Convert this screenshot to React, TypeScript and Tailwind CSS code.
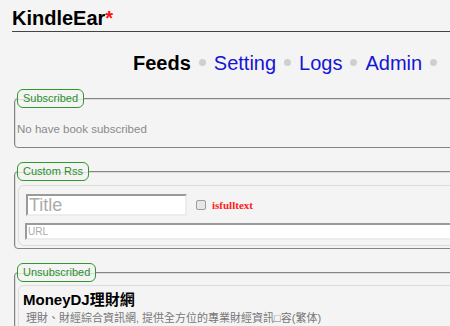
export default function App() {
  const links = ['Setting', 'Logs', 'Admin'];

  return (
    <div className="h-[326px] w-full overflow-hidden bg-[#f4f4f4] font-['Liberation_Sans',Arial,sans-serif]">
      <div className="w-[760px] pl-[12px]">
        {/* HEADER */}
        <header className="border-b border-[#444] pt-[6px] pb-[1px]">
          <h1 className="text-[20px] leading-[24px] font-bold text-black">
            KindleEar<span className="text-[#ff1010]">*</span>
          </h1>
        </header>

        {/* NAV */}
        <nav className="mt-[19px] flex items-center gap-[8px] pl-[121px] text-[20px] leading-[24px]">
          <span className="font-bold text-black">Feeds</span>
          {links.map((name) => (
            <span key={name} className="flex items-center gap-[8px]">
              <span className="mb-[2px] h-[7px] w-[7px] rounded-full bg-[#cfcfcf]" />
              <a href="#" className="text-[#1515d5]">
                {name}
              </a>
            </span>
          ))}
          <span className="mb-[2px] h-[7px] w-[7px] rounded-full bg-[#cfcfcf]" />
        </nav>

        {/* SUBSCRIBED */}
        <fieldset className="mt-[14px] ml-[2px] rounded-[4px] border border-[#858585] px-[2px] pt-[14px] pb-[11px] shadow-[inset_1px_1px_0_#dcdcdc]">
          <legend className="h-[19px] rounded-[6px] border border-[#2e9a2e] px-[5px] text-[11px] leading-[17px] text-[#2a8f2a]">
            Subscribed
          </legend>
          <p className="text-[11.5px] leading-[14px] text-[#8a8a8a]">No have book subscribed</p>
        </fieldset>

        {/* CUSTOM RSS */}
        <fieldset className="mt-[14px] ml-[2px] rounded-[4px] border border-[#858585] px-[2px] pt-[4px] pb-[2px] shadow-[inset_1px_1px_0_#dcdcdc]">
          <legend className="h-[19px] rounded-[6px] border border-[#2e9a2e] px-[5px] text-[11px] leading-[17px] text-[#2a8f2a]">
            Custom Rss
          </legend>
          <div className="ml-[1px] rounded-[6px] border border-[#dcdcdc] pt-[8px] pb-[5px]">
            <div className="flex items-center">
              <input
                placeholder="Title"
                className="ml-[7px] h-[22px] w-[161px] border-2 border-t-[#9a9a9a] border-l-[#9a9a9a] border-r-[#ececec] border-b-[#ececec] bg-white px-[1px] text-[18px] placeholder:text-[#ababab] outline-none"
              />
              <input
                type="checkbox"
                className="ml-[9px] h-[10px] w-[10px] appearance-none rounded-[2px] border border-[#9d9d9d] bg-[#e6e6e6]"
              />
              <span className="ml-[6px] font-['Liberation_Serif',serif] text-[11px] font-bold text-[#ff2020]">
                isfulltext
              </span>
            </div>
            <input
              placeholder="URL"
              className="mt-[7px] ml-[6px] block h-[17px] w-[680px] border-2 border-t-[#9a9a9a] border-l-[#9a9a9a] border-r-[#ececec] border-b-[#ececec] bg-white px-[1px] text-[10px] placeholder:text-[#ababab] outline-none"
            />
          </div>
        </fieldset>

        {/* UNSUBSCRIBED */}
        <fieldset className="mt-[14px] ml-[2px] rounded-[4px] border border-[#858585] px-[2px] pt-[3px] pb-[2px] shadow-[inset_1px_1px_0_#dcdcdc]">
          <legend className="h-[19px] rounded-[6px] border border-[#2e9a2e] px-[5px] text-[11px] leading-[17px] text-[#2a8f2a]">
            Unsubscribed
          </legend>
          <div className="ml-[1px] rounded-[6px] border border-[#dcdcdc] pt-[5px] pb-[6px]">
            <div className="pl-[4px] text-[15px] leading-[18px] font-bold text-black font-['Liberation_Sans','Noto_Sans_CJK_TC',sans-serif]">
              MoneyDJ理財網
            </div>
            <div className="mt-[3px] pl-[7px] text-[11px] leading-[13px] text-[#777] font-['Liberation_Sans','Noto_Sans_CJK_TC',sans-serif]">
              理財、財經綜合資訊網, 提供全方位的專業財經資訊□容(繁体)
            </div>
          </div>
        </fieldset>
      </div>
    </div>
  );
}
